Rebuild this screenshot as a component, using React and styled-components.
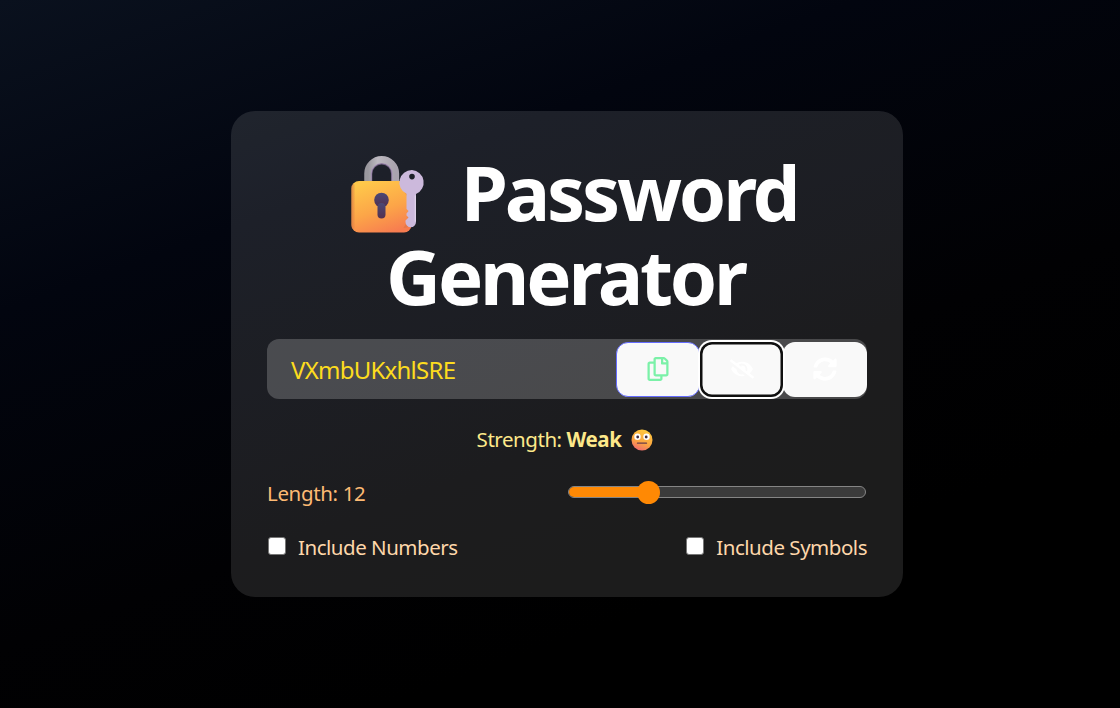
import React, { useState } from 'react';
import styled, { createGlobalStyle, css } from 'styled-components';
import { FaRegCopy, FaEyeSlash, FaSyncAlt } from 'react-icons/fa';

const GlobalStyle = createGlobalStyle`
  * { box-sizing: border-box; }
  html, body, #root { height: 100%; }
  body {
    margin: 0;
    overflow: hidden;
    background: #000;
    font-family: 'Segoe UI', 'Noto Sans', 'Open Sans', sans-serif;
    -webkit-font-smoothing: antialiased;
  }
`;

const Page = styled.main`
  height: 100%;
  display: flex;
  align-items: center;
  justify-content: center;
  padding-left: 14px;
  background: linear-gradient(160deg, #0a111e 0%, #02050f 28%, #010103 58%, #000 76%);
`;

const Card = styled.section`
  width: 672px;
  height: 486px;
  padding: 41px 36px 36px;
  border-radius: 24px;
  background: rgba(255, 255, 255, 0.108);
`;

const Title = styled.h1`
  margin: 0;
  height: 187px;
  font-size: 76px;
  line-height: 80px;
  font-weight: 700;
  letter-spacing: -3.2px;
  color: #fff;
`;

const TitleLine = styled.span`
  display: flex;
  justify-content: center;
  align-items: flex-start;
  gap: 35px;
  height: 84px;
  padding-left: ${(p) => p.$indent || 0}px;
  padding-right: ${(p) => p.$outdent || 0}px;
`;

const PasswordRow = styled.div`
  display: flex;
  align-items: center;
  height: 60px;
  border-radius: 12px;
  background: rgba(255, 255, 255, 0.2);
`;

const PasswordText = styled.span`
  flex: 1;
  padding: 1px 0 0 24px;
  font-size: 24px;
  letter-spacing: -0.75px;
  color: #fddc1e;
`;

const IconButton = styled.button`
  display: grid;
  place-items: center;
  width: 83.6px;
  height: 55px;
  padding: 0;
  border: 1px solid ${(p) => p.$border || 'transparent'};
  border-radius: 12px;
  background: #f9f9f9;
  color: ${(p) => p.$color || '#fff'};
  font-size: 24px;
  ${(p) =>
    p.$focused &&
    css`
      position: relative;
      border: 0;
      box-shadow: inset 0 0 0 2.5px #101010, 0 0 0 2px #fff;
    `}
`;

const Strength = styled.p`
  display: flex;
  align-items: center;
  justify-content: center;
  gap: 10px;
  margin: 26px 4px 0 0;
  height: 30px;
  font-size: 20.5px;
  letter-spacing: -0.45px;
  color: #fde88a;
`;

const StrengthText = styled.span`
  padding-bottom: 2px;
`;

const LengthRow = styled.label`
  display: flex;
  align-items: center;
  justify-content: space-between;
  height: 30px;
  margin-top: 23px;
  padding-right: 1px;
  font-size: 20.5px;
  letter-spacing: -0.35px;
  color: #fdba74;
`;

const Track = styled.span`
  display: flex;
  align-items: center;
  width: 298px;
  height: 12px;
  margin-bottom: 2px;
  border: 1px solid #858585;
  border-radius: 6px;
  background: #3b3b3b;
`;

const Fill = styled.span`
  width: 72px;
  height: 10px;
  border-radius: 5px 0 0 5px;
  background: #ff8904;
`;

const Thumb = styled.span`
  width: 23px;
  height: 23px;
  margin-left: -4px;
  border-radius: 50%;
  background: #ff8904;
`;

const Options = styled.div`
  display: flex;
  justify-content: space-between;
  margin-top: 24px;
`;

const Option = styled.label`
  display: flex;
  align-items: center;
  gap: 12px;
  height: 30px;
  font-size: 20.5px;
  letter-spacing: -0.48px;
  color: #fed7aa;
`;

const CheckBox = styled.input`
  appearance: none;
  width: 18px;
  height: 18px;
  margin: 0 0 3px 1px;
  border: 1px solid #767676;
  border-radius: 3px;
  background: #fff;
`;

const LockIcon = styled.svg`
  margin-top: 4px;
  flex: none;
`;

function LockWithKey() {
  return (
    <LockIcon width="75" height="77" viewBox="0 0 75 77" aria-hidden="true">
      <defs>
        <linearGradient id="body" x1="0.3" y1="0" x2="0.7" y2="1">
          <stop offset="0" stopColor="#ffc84a" />
          <stop offset="0.55" stopColor="#fca548" />
          <stop offset="1" stopColor="#f77c50" />
        </linearGradient>
        <linearGradient id="shackle" x1="0" y1="0" x2="1" y2="0">
          <stop offset="0" stopColor="#9a989e" />
          <stop offset="0.35" stopColor="#bdb9c0" />
          <stop offset="1" stopColor="#a9a3ae" />
        </linearGradient>
        <linearGradient id="hole" x1="0" y1="0" x2="0" y2="1">
          <stop offset="0" stopColor="#4b4876" />
          <stop offset="1" stopColor="#53304f" />
        </linearGradient>
        <linearGradient id="edge" x1="0" y1="0" x2="1" y2="0">
          <stop offset="0" stopColor="#d97843" stopOpacity="0.8" />
          <stop offset="1" stopColor="#d97843" stopOpacity="0" />
        </linearGradient>
      </defs>
      <path d="M17 29V17.500a13.700 13.700 0 0 1 27.400 0V29" fill="none" stroke="url(#shackle)" strokeWidth="7.500" />
      <path d="M20.500 27V18a10.200 10.200 0 0 1 20.400 0v9" fill="none" stroke="#a88bbd" strokeOpacity=".6" strokeWidth="1.500" />
      <rect x="0.500" y="25" width="60" height="51.500" rx="7.500" fill="url(#body)" />
      <rect x="0.500" y="28" width="4" height="45" rx="4" fill="url(#edge)" />
      <circle cx="30.500" cy="44" r="7.300" fill="url(#hole)" />
      <rect x="26.500" y="47" width="8" height="15.500" rx="4" fill="url(#hole)" />
      <path d="M60.500 30l-8 4 5 9-1 22-4 7c5 0 8-3 8-7z" fill="#c96b3c" opacity=".35" />
      <path fillRule="evenodd" d="M61 14a12.500 12.500 0 0 0-5.500 23.800v15.200l2 2-2 2.500v2l2 2-3 3v1.500a5 5 0 0 0 10.500 0V38a12.500 12.500 0 0 0-4-24zm0 3.800a2.800 2.800 0 1 1 0 5.600 2.800 2.800 0 0 1 0-5.600z" fill="#ccb9dc" />
      <path d="M64.300 39.500v26" stroke="#e0d3ea" strokeWidth="1.200" />
    </LockIcon>
  );
}

function NeutralFace() {
  return (
    <svg width="22" height="22" viewBox="0 0 22 22" aria-hidden="true">
      <defs>
        <linearGradient id="face" x1="0.7" y1="0" x2="0.3" y2="1">
          <stop offset="0" stopColor="#ffca3e" />
          <stop offset="0.6" stopColor="#fba541" />
          <stop offset="1" stopColor="#ef6a72" />
        </linearGradient>
      </defs>
      <circle cx="11" cy="11" r="10.500" fill="url(#face)" />
      <circle cx="6.500" cy="7.800" r="3.200" fill="#fff" />
      <circle cx="15.500" cy="7.800" r="3.200" fill="#fff" />
      <circle cx="6.700" cy="8" r="1.400" fill="#402b3e" />
      <circle cx="15.200" cy="8" r="1.400" fill="#402b3e" />
      <path d="M6.500 14.200h9" stroke="#693c4b" strokeWidth="1.300" strokeLinecap="round" />
    </svg>
  );
}

export default function App() {
  const [numbers, setNumbers] = useState(false);
  const [symbols, setSymbols] = useState(false);
  return (
    <>
      <GlobalStyle />
      <Page>
        <Card>
          <Title>
            <TitleLine $indent={14}>
              <LockWithKey />
              <span>Password</span>
            </TitleLine>
            <TitleLine $outdent={3}>Generator</TitleLine>
          </Title>
          <PasswordRow>
            <PasswordText>VXmbUKxhlSRE</PasswordText>
            <IconButton $color="#7bf1a8" $border="#646cff" aria-label="Copy"><FaRegCopy /></IconButton>
            <IconButton $focused aria-label="Hide"><FaEyeSlash /></IconButton>
            <IconButton aria-label="Regenerate"><FaSyncAlt /></IconButton>
          </PasswordRow>
          <Strength>
            <StrengthText>Strength: <strong>Weak</strong></StrengthText>
            <NeutralFace />
          </Strength>
          <LengthRow>
            Length: 12
            <Track><Fill /><Thumb /></Track>
          </LengthRow>
          <Options>
            <Option>
              <CheckBox type="checkbox" checked={numbers} onChange={() => setNumbers(!numbers)} />
              Include Numbers
            </Option>
            <Option>
              <CheckBox type="checkbox" checked={symbols} onChange={() => setSymbols(!symbols)} />
              Include Symbols
            </Option>
          </Options>
        </Card>
      </Page>
    </>
  );
}
